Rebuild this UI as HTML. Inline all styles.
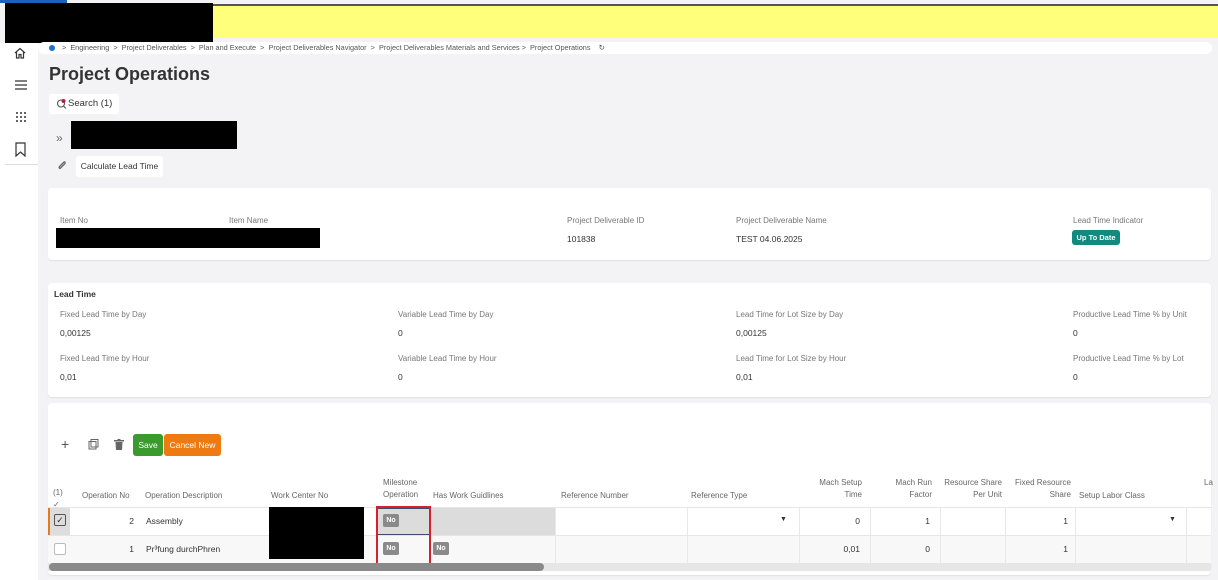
<!DOCTYPE html>
<html><head><meta charset="utf-8"><style>
*{box-sizing:border-box;margin:0;padding:0}
body{width:1218px;height:580px;overflow:hidden;background:#f3f2f4;font-family:"Liberation Sans",sans-serif;color:#333;position:relative;font-size:9px}
.abs{position:absolute}
.lbl{position:absolute;font-size:8px;color:#777}
.val{position:absolute;font-size:8.5px;color:#333}
.card{position:absolute;background:#fff;border-radius:4px;box-shadow:0 1px 1px rgba(0,0,0,.08)}
.th{position:absolute;font-size:8px;color:#666;line-height:12px}
.cell{position:absolute;font-size:8.5px}
.no{position:absolute;background:#8a8a8a;color:#fff;font-size:7px;font-weight:bold;border-radius:2px;width:16px;height:13px;line-height:13px;text-align:center}
.vl{position:absolute;top:508px;width:1px;height:55px;background:#e8e8e8}
</style></head><body>
<div class="abs" style="left:0;top:0;width:67px;height:3px;background:#1f5fbf"></div>
<div class="abs" style="left:213px;top:4px;width:1005px;height:2px;background:#555"></div>
<div class="abs" style="left:213px;top:6px;width:1005px;height:32px;background:#ffff7c"></div>
<div class="abs" style="left:5px;top:3px;width:208px;height:40px;background:#000"></div>
<div class="abs" style="left:0;top:43px;width:38px;height:537px;background:#fff"></div>
<div class="abs" style="left:5px;top:164px;width:33px;height:1px;background:#ddd"></div>
<svg class="abs" style="left:13px;top:46px" width="14" height="14" viewBox="0 0 14 14" fill="none" stroke="#333" stroke-width="1.2"><path d="M2 7L7 2.5 12 7M3.5 6V12H6V8.5H8V12H10.5V6"/></svg>
<svg class="abs" style="left:14px;top:79px" width="14" height="12" viewBox="0 0 14 12" stroke="#333" stroke-width="1.2"><path d="M1 2H13M1 6H13M1 10H13"/></svg>
<svg class="abs" style="left:15px;top:111px" width="12" height="12" viewBox="0 0 12 12" fill="#333"><circle cx="2" cy="2" r="1"/><circle cx="6" cy="2" r="1"/><circle cx="10" cy="2" r="1"/><circle cx="2" cy="6" r="1"/><circle cx="6" cy="6" r="1"/><circle cx="10" cy="6" r="1"/><circle cx="2" cy="10" r="1"/><circle cx="6" cy="10" r="1"/><circle cx="10" cy="10" r="1"/></svg>
<svg class="abs" style="left:15px;top:142px" width="11" height="15" viewBox="0 0 11 15" fill="none" stroke="#333" stroke-width="1.2"><path d="M1 1H10V14L5.5 10 1 14Z"/></svg>
<div class="abs" style="left:38px;top:42px;width:1174px;height:12px;background:#fff;border-radius:6px"></div>
<div class="abs" style="left:49px;top:45px;width:6px;height:6px;border-radius:50%;background:#1a6fd0"></div>
<div class="abs" style="left:62px;top:43px;font-size:7.3px;color:#555;line-height:10px;white-space:nowrap">&gt; &nbsp;Engineering &nbsp;&gt; &nbsp;Project Deliverables &nbsp;&gt; &nbsp;Plan and Execute &nbsp;&gt; &nbsp;Project Deliverables Navigator &nbsp;&gt; &nbsp;Project Deliverables Materials and Services &gt; &nbsp;Project Operations &nbsp;&nbsp; ↻</div>
<div class="abs" style="left:49px;top:64px;font-size:18px;font-weight:bold;color:#333">Project Operations</div>
<div class="abs" style="left:49px;top:94px;width:70px;height:20px;background:#fff;border-radius:3px;font-size:9.5px;line-height:20px;padding-left:19px;color:#333">Search (1)</div>
<svg class="abs" style="left:56px;top:98px" width="12" height="12" viewBox="0 0 12 12" fill="none" stroke="#555" stroke-width="1.1"><circle cx="5" cy="5.5" r="3.5"/><path d="M7.5 8L10 10.5"/><circle cx="7.5" cy="3" r="2" fill="#b02040" stroke="none"/></svg>
<div class="abs" style="left:56px;top:131px;font-size:12px;color:#666">»</div>
<div class="abs" style="left:71px;top:121px;width:166px;height:28px;background:#000"></div>
<svg class="abs" style="left:57px;top:160px" width="10" height="10" viewBox="0 0 10 10" fill="none" stroke="#666" stroke-width="1.3"><path d="M7 2L2.5 6.5Q1.5 8 3 8.5L8 3.5Q8.5 1.5 7 2"/></svg>
<div class="abs" style="left:76px;top:156px;width:87px;height:21px;background:#fff;border-radius:3px;font-size:8.5px;line-height:21px;text-align:center">Calculate Lead Time</div>
<div class="card" style="left:48px;top:188px;width:1163px;height:72px"></div>
<div class="lbl" style="left:60px;top:216px">Item No</div>
<div class="lbl" style="left:229px;top:216px">Item Name</div>
<div class="abs" style="left:56px;top:228px;width:264px;height:20px;background:#000"></div>
<div class="lbl" style="left:567px;top:216px">Project Deliverable ID</div>
<div class="val" style="left:567px;top:234px">101838</div>
<div class="lbl" style="left:736px;top:216px">Project Deliverable Name</div>
<div class="val" style="left:736px;top:234px">TEST 04.06.2025</div>
<div class="lbl" style="left:1073px;top:216px">Lead Time Indicator</div>
<div class="abs" style="left:1072px;top:230px;width:48px;height:15px;background:#138a80;border-radius:3px;color:#fff;font-size:7.5px;font-weight:bold;text-align:center;line-height:15px">Up To Date</div>
<div class="card" style="left:48px;top:283px;width:1163px;height:114px"></div>
<div class="abs" style="left:54px;top:289px;font-size:8.5px;font-weight:bold;color:#333">Lead Time</div>
<div class="lbl" style="left:60px;top:310px">Fixed Lead Time by Day</div><div class="val" style="left:60px;top:328px">0,00125</div>
<div class="lbl" style="left:60px;top:354px">Fixed Lead Time by Hour</div><div class="val" style="left:60px;top:372px">0,01</div>
<div class="lbl" style="left:398px;top:310px">Variable Lead Time by Day</div><div class="val" style="left:398px;top:328px">0</div>
<div class="lbl" style="left:398px;top:354px">Variable Lead Time by Hour</div><div class="val" style="left:398px;top:372px">0</div>
<div class="lbl" style="left:736px;top:310px">Lead Time for Lot Size by Day</div><div class="val" style="left:736px;top:328px">0,00125</div>
<div class="lbl" style="left:736px;top:354px">Lead Time for Lot Size by Hour</div><div class="val" style="left:736px;top:372px">0,01</div>
<div class="lbl" style="left:1073px;top:310px">Productive Lead Time % by Unit</div><div class="val" style="left:1073px;top:328px">0</div>
<div class="lbl" style="left:1073px;top:354px">Productive Lead Time % by Lot</div><div class="val" style="left:1073px;top:372px">0</div>
<div class="card" style="left:48px;top:403px;width:1163px;height:172px"></div>
<div class="abs" style="left:61px;top:436px;font-size:14px;color:#555">+</div>
<svg class="abs" style="left:88px;top:439px" width="11" height="11" viewBox="0 0 11 11" fill="none" stroke="#666"><rect x="1" y="2.5" width="7" height="7.5"/><rect x="3" y="0.5" width="7" height="7.5"/></svg>
<svg class="abs" style="left:114px;top:439px" width="10" height="11" viewBox="0 0 10 11" fill="#666"><rect x="0" y="1" width="10" height="1.5"/><rect x="3.5" y="0" width="3" height="1.5"/><path d="M1.5 3H8.5L8 11H2Z"/></svg>
<div class="abs" style="left:133px;top:434px;width:30px;height:22px;background:#3a9a2e;border-radius:3px;color:#fff;font-size:8.5px;text-align:center;line-height:22px">Save</div>
<div class="abs" style="left:164px;top:434px;width:57px;height:22px;background:#ee7a12;border-radius:3px;color:#fff;font-size:8.5px;text-align:center;line-height:22px">Cancel New</div>
<div class="th" style="left:53px;top:487px">(1)<br>✓</div>
<div class="th" style="left:82px;top:490px">Operation No</div>
<div class="th" style="left:145px;top:490px">Operation Description</div>
<div class="th" style="left:271px;top:490px">Work Center No</div>
<div class="th" style="left:383px;top:477px">Milestone<br>Operation</div>
<div class="th" style="left:433px;top:490px">Has Work Guidlines</div>
<div class="th" style="left:561px;top:490px">Reference Number</div>
<div class="th" style="left:691px;top:490px">Reference Type</div>
<div class="th" style="left:782px;top:477px;width:80px;text-align:right">Mach Setup<br>Time</div>
<div class="th" style="left:866px;top:477px;width:66px;text-align:right">Mach Run<br>Factor</div>
<div class="th" style="left:936px;top:477px;width:66px;text-align:right">Resource Share<br>Per Unit</div>
<div class="th" style="left:1005px;top:477px;width:66px;text-align:right">Fixed Resource<br>Share</div>
<div class="th" style="left:1079px;top:490px">Setup Labor Class</div>
<div class="th" style="left:1204px;top:477px">La</div>
<div class="abs" style="left:48px;top:507px;width:1163px;height:1px;background:#e6e6e6"></div>
<div class="abs" style="left:48px;top:508px;width:1163px;height:27px;background:#fff"></div>
<div class="abs" style="left:48px;top:508px;width:22px;height:27px;background:#ddd;border-left:2px solid #e07b20"></div>
<div class="abs" style="left:430px;top:508px;width:125px;height:27px;background:#dcdcdc"></div>
<div class="abs" style="left:377px;top:508px;width:53px;height:27px;background:#dcdcdc;border:1px solid #3a4a6a"></div>
<div class="abs" style="left:48px;top:535px;width:1163px;height:28px;background:#f8f8f8;border-top:1px solid #e6e6e6"></div>
<div class="vl" style="left:555px"></div>
<div class="vl" style="left:687px"></div>
<div class="vl" style="left:799px"></div>
<div class="vl" style="left:870px"></div>
<div class="vl" style="left:940px"></div>
<div class="vl" style="left:1005px"></div>
<div class="vl" style="left:1075px"></div>
<div class="vl" style="left:1186px"></div>
<div class="abs" style="left:54px;top:514px;width:12px;height:12px;border:1px solid #555;border-radius:2px;font-size:9px;line-height:10px;text-align:center">✓</div>
<div class="abs" style="left:54px;top:543px;width:12px;height:12px;border:1px solid #bbb;border-radius:2px;background:#fff"></div>
<div class="cell" style="left:70px;top:516px;width:64px;text-align:right">2</div>
<div class="cell" style="left:146px;top:516px">Assembly</div>
<div class="cell" style="left:70px;top:544px;width:64px;text-align:right">1</div>
<div class="cell" style="left:146px;top:544px">Pr³fung durchPhren</div>
<div class="abs" style="left:269px;top:507px;width:95px;height:52px;background:#000"></div>
<div class="no" style="left:383px;top:514px">No</div>
<div class="no" style="left:383px;top:542px">No</div>
<div class="no" style="left:433px;top:542px">No</div>
<div class="abs" style="left:376px;top:506px;width:55px;height:60px;border:2px solid #d62030"></div>
<div class="cell" style="left:780px;top:516px;font-size:7px">▼</div>
<div class="cell" style="left:1169px;top:516px;font-size:7px">▼</div>
<div class="cell" style="left:782px;top:516px;width:78px;text-align:right">0</div>
<div class="cell" style="left:866px;top:516px;width:64px;text-align:right">1</div>
<div class="cell" style="left:1005px;top:516px;width:63px;text-align:right">1</div>
<div class="cell" style="left:782px;top:544px;width:78px;text-align:right">0,01</div>
<div class="cell" style="left:866px;top:544px;width:64px;text-align:right">0</div>
<div class="cell" style="left:1005px;top:544px;width:63px;text-align:right">1</div>
<div class="abs" style="left:48px;top:563px;width:1163px;height:8px;background:#e6e6e6"></div>
<div class="abs" style="left:49px;top:563px;width:495px;height:8px;background:#8a8a8a;border-radius:4px"></div>
</body></html>
